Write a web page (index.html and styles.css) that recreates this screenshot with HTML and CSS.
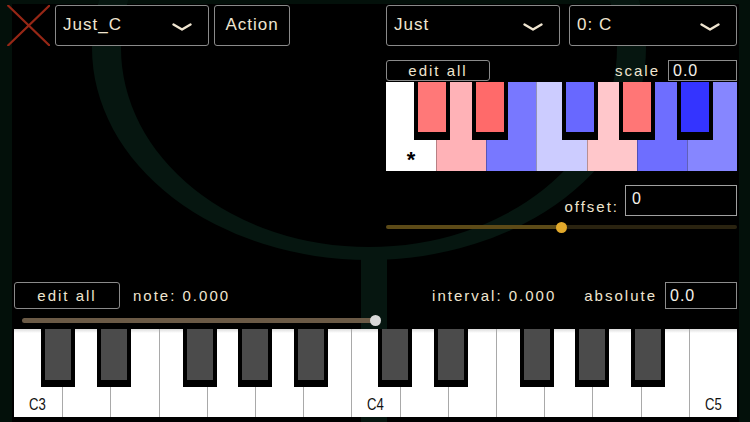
FILE: index.html
```html
<!DOCTYPE html>
<html>
<head>
<meta charset="utf-8">
<link rel="stylesheet" href="styles.css">
</head>
<body>
<svg class="bg" width="750" height="422" viewBox="0 0 750 422">
  <rect width="750" height="422" fill="#03100a"/>
  <rect x="12" y="4" width="727" height="418" fill="#000"/>
  <path fill="#061610" fill-rule="evenodd" d="M92 48 a277 212 0 1 0 554 0 a277 212 0 1 0 -554 0 Z M121 48 a248 199 0 1 0 496 0 a248 199 0 1 0 -496 0 Z"/>
  <rect x="361" y="252" width="26" height="170" fill="#061610"/>
</svg>
<div class="app">
  <div class="topbar">
    <div class="group">
      <svg class="close" viewBox="0 0 43 41"><path d="M0.5 0 L43 41 M43 0 L0.5 41" stroke="#962716" stroke-width="2.2" fill="none"/></svg>
      <div class="select w-preset"><span>Just_C</span><svg class="chev" viewBox="0 0 20 8"><polyline points="1.5,1.5 10,6.5 18.5,1.5" fill="none" stroke="#efe5d0" stroke-width="2.4" stroke-linecap="round" stroke-linejoin="round"/></svg></div>
      <div class="btn btn-action">Action</div>
    </div>
    <div class="group right">
      <div class="select w-temp"><span>Just</span><svg class="chev" viewBox="0 0 20 8"><polyline points="1.5,1.5 10,6.5 18.5,1.5" fill="none" stroke="#efe5d0" stroke-width="2.4" stroke-linecap="round" stroke-linejoin="round"/></svg></div>
      <div class="select w-key"><span>0: C</span><svg class="chev" viewBox="0 0 20 8"><polyline points="1.5,1.5 10,6.5 18.5,1.5" fill="none" stroke="#efe5d0" stroke-width="2.4" stroke-linecap="round" stroke-linejoin="round"/></svg></div>
    </div>
  </div>

  <div class="tuner">
    <div class="tuner-head">
      <div class="btn btn-edit-top">edit all</div>
      <div class="spacer"></div>
      <span class="label">scale</span>
      <div class="field field-scale">0.0</div>
    </div>
    <div class="mini-kb">
      <div class="wk k-c"><span class="star">*</span></div>
      <div class="wk k-d"></div>
      <div class="wk k-e"></div>
      <div class="wk k-f"></div>
      <div class="wk k-g"></div>
      <div class="wk k-a"></div>
      <div class="wk k-b"></div>
      <div class="bk cs k-cs"></div>
      <div class="bk ds k-ds"></div>
      <div class="bk fs k-fs"></div>
      <div class="bk gs k-gs"></div>
      <div class="bk as k-as"></div>
    </div>
    <div class="offset-row">
      <span class="label offset-label">offset:</span>
      <div class="field field-offset">0</div>
    </div>
    <div class="slider offset-slider">
      <div class="track"></div>
      <div class="thumb" style="left:50%"></div>
    </div>
  </div>

  <div class="bottom-row">
    <div class="btn btn-edit-bottom">edit all</div>
    <span class="label note">note: 0.000</span>
    <div class="spacer"></div>
    <span class="label">interval: 0.000</span>
    <span class="label abs-label">absolute</span>
    <div class="field field-abs">0.0</div>
  </div>

  <div class="slider note-slider">
    <div class="track"></div>
    <div class="thumb" style="left:100%"></div>
  </div>

  <div class="keyboard">
    <div class="octave">
      <div class="wk first"><span class="lbl">C3</span></div>
      <div class="wk"></div>
      <div class="wk"></div>
      <div class="wk"></div>
      <div class="wk"></div>
      <div class="wk"></div>
      <div class="wk"></div>
      <div class="bk cs"></div>
      <div class="bk ds"></div>
      <div class="bk fs"></div>
      <div class="bk gs"></div>
      <div class="bk as"></div>
    </div>
    <div class="octave">
      <div class="wk"><span class="lbl">C4</span></div>
      <div class="wk"></div>
      <div class="wk"></div>
      <div class="wk"></div>
      <div class="wk"></div>
      <div class="wk"></div>
      <div class="wk"></div>
      <div class="bk cs"></div>
      <div class="bk ds"></div>
      <div class="bk fs"></div>
      <div class="bk gs"></div>
      <div class="bk as"></div>
    </div>
    <div class="wk last"><span class="lbl">C5</span></div>
  </div>
</div>
</body>
</html>
```

FILE: styles.css
```css
html, body {
  margin: 0;
  padding: 0;
}
body {
  width: 750px;
  height: 422px;
  overflow: hidden;
  position: relative;
  background: #000;
  font-family: "Liberation Sans", Arial, sans-serif;
  color: #efe5d0;
}
.bg {
  position: absolute;
  left: 0;
  top: 0;
  z-index: 0;
}
.app {
  position: relative;
  z-index: 1;
  box-sizing: border-box;
  width: 750px;
  height: 422px;
  padding: 5px 13px 0 14px;
  display: flex;
  flex-direction: column;
  overflow: hidden;
}

/* top bar */
.topbar {
  display: flex;
  justify-content: space-between;
  height: 41px;
}
.group {
  display: flex;
  gap: 5px;
}
.group.right {
  gap: 9px;
}
.close {
  width: 43px;
  height: 41px;
  margin-left: -7px;
}
.select {
  box-sizing: border-box;
  height: 41px;
  border: 1px solid #8a8a8a;
  border-radius: 3px;
  background: #000;
  display: flex;
  align-items: center;
  justify-content: space-between;
  padding: 0 16px 2px 7px;
  font-size: 17px;
  letter-spacing: 1px;
}
.chev {
  width: 20px;
  height: 8px;
  margin-top: 4px;
}
.w-preset { width: 154px; }
.w-temp { width: 174px; }
.w-key { width: 168px; }

.btn {
  box-sizing: border-box;
  border: 1px solid #8a8a8a;
  border-radius: 3px;
  background: #000;
  display: flex;
  align-items: center;
  justify-content: center;
  font-size: 15px;
  letter-spacing: 2px;
}
.btn-action {
  width: 76px;
  height: 41px;
  font-size: 17px;
  letter-spacing: 1px;
  padding-bottom: 2px;
}
.label {
  font-size: 15px;
  letter-spacing: 2px;
  white-space: nowrap;
}
.spacer {
  flex: 1;
}
.field {
  box-sizing: border-box;
  border: 1px solid #8c8c8c;
  background: #000;
  color: #f6f2ea;
  font-size: 16px;
  letter-spacing: 1px;
  padding-left: 4px;
  display: flex;
  align-items: center;
}

/* tuner panel */
.tuner {
  align-self: flex-end;
  width: 351px;
  margin-top: 14px;
  display: flex;
  flex-direction: column;
}
.tuner-head {
  display: flex;
  align-items: center;
  height: 21px;
}
.btn-edit-top {
  width: 104px;
  height: 21px;
}
.field-scale {
  width: 69px;
  height: 21px;
  margin-left: 8px;
}

.mini-kb {
  position: relative;
  display: grid;
  grid-template-columns: repeat(7, minmax(0, 1fr));
  height: 89px;
  margin-top: 1px;
}
.mini-kb .wk {
  border-left: 1px solid rgba(0, 0, 0, 0.28);
  display: flex;
  align-items: flex-end;
  justify-content: center;
}
.mini-kb .wk:first-child {
  border-left: none;
}
.star {
  font-size: 22px;
  line-height: 22px;
  font-weight: bold;
  color: #000;
}
.k-c { background: #ffffff; }
.k-d { background: #ffb2b7; }
.k-e { background: #7878ff; }
.k-f { background: #ccccff; }
.k-g { background: #ffc7cb; }
.k-a { background: #6e6eff; }
.k-b { background: #8686ff; }
.k-cs { background: #ff7878; }
.k-ds { background: #ff6a6a; }
.k-fs { background: #6868ff; }
.k-gs { background: #ff7676; }
.k-as { background: #3434ff; }

.bk {
  position: absolute;
  top: 0;
  box-sizing: border-box;
  width: 10.2%;
  height: 58px;
  border-style: solid;
  border-color: #000;
  border-width: 0 4px 8px 4px;
}
.cs { left: 8%; }
.ds { left: 24.5%; }
.fs { left: 50.1%; }
.gs { left: 66.4%; }
.as { left: 82.9%; }

.offset-row {
  display: flex;
  justify-content: flex-end;
  align-items: flex-end;
  height: 31px;
  margin-top: 14px;
}
.offset-label {
  line-height: 15px;
  margin-bottom: 2px;
}
.field-offset {
  width: 112px;
  height: 31px;
  margin-left: 6px;
  align-items: flex-start;
  padding: 4px 0 0 6px;
  border-color: #a0a0a0;
  line-height: 18px;
}

/* sliders */
.slider {
  position: relative;
  height: 12px;
}
.slider .track {
  border-radius: 3px;
}
.slider .thumb {
  position: absolute;
  top: 0.5px;
  width: 11px;
  height: 11px;
  margin-left: -5.5px;
  border-radius: 50%;
}
.offset-slider {
  margin-top: 5px;
}
.offset-slider .track {
  height: 4px;
  margin-top: 4px;
  background: linear-gradient(to right, #5c4a17 0, #5c4a17 50%, #2a2310 50%, #2a2310 100%);
}
.offset-slider .thumb {
  background: #e2a92b;
}

.bottom-row {
  display: flex;
  align-items: center;
  height: 27px;
  margin-top: 49px;
}
.btn-edit-bottom {
  width: 106px;
  height: 27px;
}
.note {
  margin-left: 13px;
}
.abs-label {
  margin-left: 28px;
}
.field-abs {
  width: 72px;
  height: 27px;
  margin-left: 8px;
}

.note-slider {
  width: 353px;
  margin: 5px 0 0 8px;
}
.note-slider .track {
  height: 5px;
  margin-top: 3.5px;
  background: #6b5a46;
}
.note-slider .thumb {
  background: #d9d9d9;
}

/* main keyboard */
.keyboard {
  display: grid;
  grid-template-columns: minmax(0, 7fr) minmax(0, 7fr) minmax(0, 1fr);
  width: 723px;
  height: 88px;
  margin-top: 3px;
  overflow: hidden;
}
.octave {
  display: grid;
  grid-template-columns: repeat(7, minmax(0, 1fr));
  position: relative;
}
.keyboard .wk {
  background: linear-gradient(#dcdcdc, #ffffff 4px);
  border-left: 1px solid #a9a9a9;
  display: flex;
  align-items: flex-end;
}
.keyboard .wk.first {
  border-left: none;
}
.keyboard .bk {
  width: 10.1%;
  border-width: 0 4px 7px 4px;
  background: #4b4b4b;
}
.lbl {
  display: inline-block;
  font-size: 16px;
  line-height: 16px;
  color: #111;
  transform: scaleX(0.82);
  transform-origin: left bottom;
  margin: 0 0 4px 15px;
}
```
